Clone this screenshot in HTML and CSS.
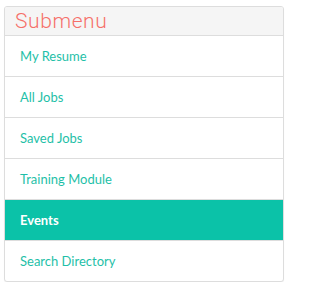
FILE: index.html
```html
<!DOCTYPE html>
<html>
<head>
<meta charset="utf-8">
<link rel="stylesheet" href="styles.css">
</head>
<body>
<div class="panel">
  <div class="panel-heading">Submenu</div>
  <ul class="menu">
    <li><a href="#">My Resume</a></li>
    <li><a href="#">All Jobs</a></li>
    <li><a href="#">Saved Jobs</a></li>
    <li><a href="#">Training Module</a></li>
    <li class="active"><a href="#">Events</a></li>
    <li><a href="#">Search Directory</a></li>
  </ul>
</div>
</body>
</html>
```
FILE: styles.css
```css
html, body {
  margin: 0;
  padding: 0;
  background: #ffffff;
}
body {
  padding: 6px 4px 0 4px;
}
.panel {
  width: 278px;
  border: 1px solid #dddddd;
  border-radius: 3px;
  background: #ffffff;
  overflow: hidden;
  box-shadow: 0 1px 1px rgba(0,0,0,0.05);
}
.panel-heading {
  height: 28px;
  line-height: 28px;
  padding: 0 10px;
  background: #f5f5f5;
  border-bottom: 1px solid #dddddd;
  color: #f5706a;
  font-family: Roboto, sans-serif;
  font-weight: 300;
  font-size: 21px;
  letter-spacing: 0.6px;
}
.menu {
  list-style: none;
  margin: 0;
  padding: 0;
}
.menu li {
  border-bottom: 1px solid #dddddd;
}
.menu li:last-child {
  border-bottom: none;
}
.menu a {
  display: block;
  height: 40px;
  line-height: 40px;
  padding: 0 15px;
  color: #1fbfa8;
  text-decoration: none;
  font-family: Lato, sans-serif;
  font-size: 13px;
}
.menu li.active a {
  background: #0bc2a8;
  color: #ffffff;
  font-weight: 700;
}
```
